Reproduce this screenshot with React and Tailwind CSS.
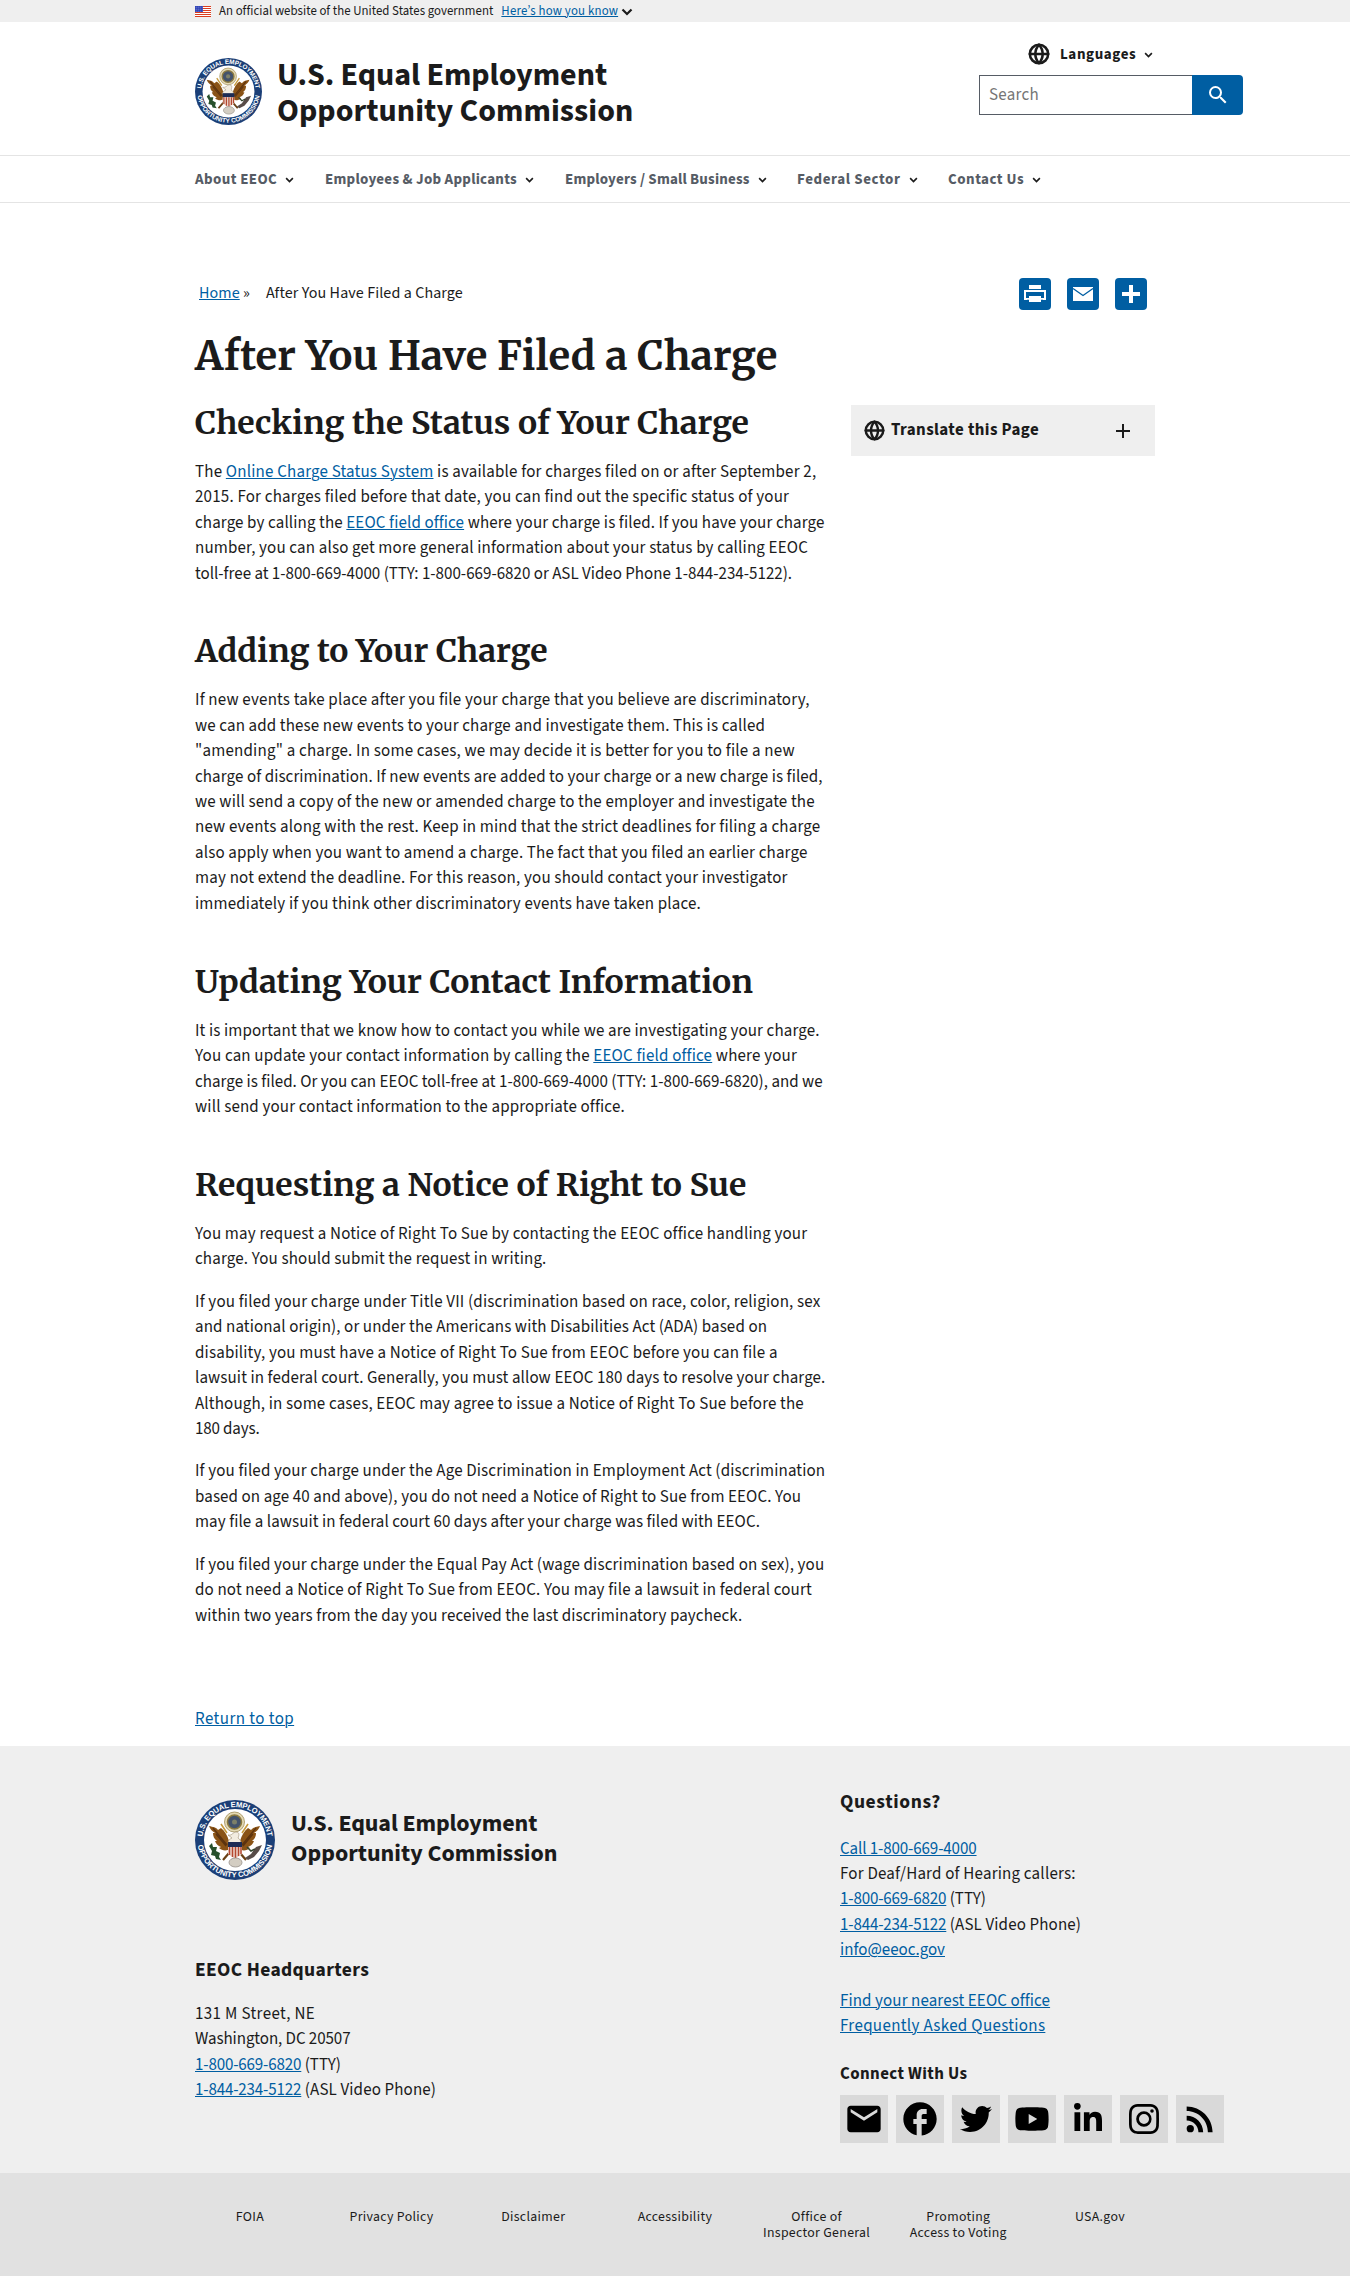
import React from "react";
import { MdEmail, MdFacebook, MdRssFeed, MdSearch, MdAdd } from "react-icons/md";
import { FaTwitter, FaLinkedinIn } from "react-icons/fa";
import { AiFillYoutube } from "react-icons/ai";
import { BsInstagram } from "react-icons/bs";
import { Globe } from "lucide-react";

const A = ({ children, className = "" }) => (
  <a href="#" className={`text-[#005ea2] underline decoration-1 underline-offset-1 ${className}`}>{children}</a>
);

const Chevron = ({ className = "" }) => (
  <svg viewBox="0 0 12 8" className={`shrink-0 ${className}`} fill="none" stroke="currentColor" strokeWidth="2.2">
    <path d="M1.5 1.5 6 6l4.500-4.500" />
  </svg>
);

const Flag = () => (
  <svg viewBox="0 0 16 11" className="h-[11px] w-4 shrink-0">
    <rect width="16" height="11" fill="#fff" />
    {[0, 2, 4, 6, 8, 10].map((y) => (
      <rect key={y} y={y} width="16" height="1" fill="#db3e1f" />
    ))}
    <rect width="8" height="6" fill="#1e33b1" />
    {[1, 3, 5].map((y) =>
      [1, 3, 5, 7].map((x) => <rect key={`${x}-${y}`} x={x - 0.3} y={y - 0.3} width="0.800" height="0.800" fill="#fff" />)
    )}
  </svg>
);

const Seal = ({ className, id }) => (
  <svg viewBox="0 0 80 80" className={`shrink-0 ${className}`}>
    <defs>
      <path id={`${id}-top`} d="M7.800 44A32.500 32.500 0 1 1 72.200 44" />
      <path id={`${id}-bottom`} d="M2.600 40A37.400 37.400 0 0 0 77.400 40" />
    </defs>
    <circle cx="40" cy="40" r="40" fill="#1b3f77" />
    <circle cx="40" cy="40" r="31" fill="#fff" />
    <g fill="#fff" fontFamily="Liberation Sans, sans-serif" fontWeight="700" fontSize="7.600">
      <text textAnchor="middle">
        <textPath href={`#${id}-top`} startOffset="50%" textLength="96">U.S. EQUAL EMPLOYMENT</textPath>
      </text>
      <text textAnchor="middle">
        <textPath href={`#${id}-bottom`} startOffset="50%" textLength="107">OPPORTUNITY COMMISSION</textPath>
      </text>
    </g>
    <circle cx="39.500" cy="22" r="10" fill="#e4d9b4" stroke="#a08d55" strokeWidth="0.800" />
    <circle cx="39.500" cy="22" r="7" fill="#44536b" stroke="#8d7b40" strokeWidth="1.600" />
    <circle cx="39.500" cy="22" r="2.500" fill="#7d8068" />
    <path d="M14 26c4 1 7 1 9 4l3-2c4 3 6 7 8 13l1 8c-3 2-8 2-11-1l2-1c-3-1-5-3-6-6h2c-3-2-4-5-4-8h2c-3-2-5-4-6-7z" fill="#8a5316" />
    <path d="M65 26c-4 1-7 1-9 4l-3-2c-4 3-6 7-8 13l-1 8c3 2 8 2 11-1l-2-1c3-1 5-3 6-6h-2c3-2 4-5 4-8h-2c3-2 5-4 6-7z" fill="#8a5316" />
    <path d="m18 28 14 17M21 34l10 12M61 28 47 45M58 34 48 46" stroke="#5c330f" strokeWidth="1.300" />
    <path d="m26 24 6 9M53 24l-6 9" stroke="#c79a3c" strokeWidth="1.600" />
    <path d="M33 35c4 1 5-3 8-3 4 0 3 4 2 6 2 1 3 3 3 5H33c0-3 2-4 4-5z" fill="#f2ece0" stroke="#a99a80" strokeWidth="0.700" />
    <path d="M34 53l-6 7M45 53l6 7" stroke="#6a4015" strokeWidth="2.200" />
    <path d="M33 42h14v5H33z" fill="#1d2c55" />
    <path d="M33 47h14v7l-7 5-7-5z" fill="#e9cfc5" />
    <path d="M34.500 47v8M37.500 47v10M40.500 47v11M43.500 47v9M46 47v7" stroke="#b4472f" strokeWidth="1.400" />
    <path d="M14 46l3-3 1 4 4 0-1 4 4 2-1 4 2 3-5-1-1-3-4-1 1-4z" fill="#27502c" />
    <path d="M67 45l-6 2-5 7-6 4 3 2 6-3 5-6z" fill="#574c48" />
    <path d="M52 47l4 4 4-2" stroke="#34452f" strokeWidth="1.500" fill="none" />
    <ellipse cx="40.500" cy="62.500" rx="6.500" ry="4.500" fill="#d3cdc2" stroke="#97918a" strokeWidth="0.800" />
  </svg>
);

const nav = [
  { label: "About EEOC", cls: "w-[130px]", text: "tracking-[0.4px]" },
  { label: "Employees & Job Applicants", cls: "w-[240px]", text: "tracking-[0.25px]" },
  { label: "Employers / Small Business", cls: "w-[232px]", text: "tracking-[0.18px]" },
  { label: "Federal Sector", cls: "w-[151px]", text: "tracking-[0.6px]" },
  { label: "Contact Us", cls: "w-[110px]", text: "tracking-[0.5px]" },
];

const P = ({ children }) => <p className="whitespace-nowrap">{children}</p>;

const L = ({ t = "", children }) => <span className={`block ${t}`}>{children}</span>;

const H2 = ({ children, className = "" }) => (
  <h2 className={`mb-[18px] whitespace-nowrap font-[Merriweather,'Noto_Serif',serif] text-[32px] leading-[38px] font-bold ${className}`}>{children}</h2>
);

const ShareButton = ({ children }) => (
  <span className="flex size-8 items-center justify-center rounded-[4px] bg-[#005ea2] text-white">{children}</span>
);

const social = [
  { Icon: MdEmail, cls: "size-10" },
  { Icon: MdFacebook, cls: "size-10" },
  { Icon: FaTwitter, cls: "size-8" },
  { Icon: AiFillYoutube, cls: "size-[38px]" },
  { Icon: FaLinkedinIn, cls: "size-8" },
  { Icon: BsInstagram, cls: "size-[30px]" },
  { Icon: MdRssFeed, cls: "size-10" },
];

const bottomLinks = [
  ["FOIA"], ["Privacy Policy"], ["Disclaimer"], ["Accessibility"],
  ["Office of", "Inspector General"], ["Promoting", "Access to Voting"], ["USA.gov"],
];

export default function App() {
  return (
    <div className="flex h-[2276px] w-[1350px] flex-col bg-white font-['Source_Sans_3','Source_Sans_Pro','Noto_Sans',sans-serif] text-[16.96px] leading-[25.44px] text-[#1b1b1b]">
      <div className="flex h-[22px] shrink-0 items-center bg-[#efefef] pt-px pl-[195px] text-[12.800px] whitespace-nowrap">
        <Flag />
        <span className="ml-2 tracking-[0.05px]">An official website of the United States government</span>
        <span className="ml-2 tracking-[0.18px]"><A>Here’s how you know</A></span>
        <Chevron className="ml-[3px] h-2 w-3" />
      </div>

      <header className="flex h-[133px] shrink-0 pl-[195px]">
        <Seal id="head" className="mt-9 size-[67px]" />
        <div className="mt-[35px] ml-[15px] w-[702px] text-[32px] leading-[36px] font-bold whitespace-nowrap">
          <div className="tracking-[-0.05px]">U.S. Equal Employment</div>
          <div className="tracking-[0.05px]">Opportunity Commission</div>
        </div>
        <div className="w-[264px]">
          <div className="mt-[21px] ml-[49px] flex h-[22px] items-center text-[15px] font-bold">
            <Globe className="size-[22px]" strokeWidth={2.8} />
            <span className="mt-px ml-[10px] tracking-[0.6px]">Languages</span>
            <Chevron className="mt-px ml-2 h-[6px] w-[9px]" />
          </div>
          <div className="mt-[10px] flex h-10">
            <div className="flex flex-1 items-center border border-r-0 border-[#565c65] pt-px pl-[9px] tracking-[0.25px] text-[#757575]">Search</div>
            <div className="flex w-[51px] items-center justify-center rounded-r-[4px] bg-[#005ea2] text-white">
              <MdSearch className="size-6" />
            </div>
          </div>
        </div>
      </header>

      <nav className="flex h-12 shrink-0 items-center border-y border-[#e4e4e4] pt-px pl-[195px] text-[15px] font-bold whitespace-nowrap text-[#565c65]">
        {nav.map((n) => (
          <a key={n.label} className={`flex items-center ${n.cls}`}>
            <span className={n.text}>{n.label}</span>
            <Chevron className="mt-px ml-2 h-[6px] w-[9px] text-[#1b1b1b]" />
          </a>
        ))}
      </nav>

      <main className="flex h-[1543px] shrink-0 flex-col pr-[195px] pl-[195px]">
        <div className="mt-[75px] flex h-8 items-center pr-2">
          <div className="flex flex-1 pl-1 text-[16px]">
            <span className="tracking-[0.1px]"><A>Home</A> »</span>
            <span className="ml-4 tracking-[0.1px]">After You Have Filed a Charge</span>
          </div>
          <div className="flex gap-4">
            <ShareButton>
              <svg viewBox="0 0 22 20" className="h-5 w-[22px]" fill="#fff">
                <path d="M5 1h12v4H5zM0 6h22v10h-3v-3.500H3V16H0z" />
                <path d="M2 8h18v6H2z" fill="#005ea2" />
                <path d="M5 12h12v6H5zM0 6h22v1.600H0zM0 14h6v1.800H0zM16 14h6v1.800h-6z" />
              </svg>
            </ShareButton>
            <ShareButton>
              <svg viewBox="0 0 20 14" className="h-[14px] w-5">
                <path d="M0 0h20v14H0z" fill="#fff" />
                <path d="m0 1.500 10 7 10-7" fill="none" stroke="#005ea2" strokeWidth="1.300" />
              </svg>
            </ShareButton>
            <ShareButton>
              <svg viewBox="0 0 18 18" className="size-[18px]" fill="#fff">
                <path d="M7 0h4v7h7v4h-7v7H7v-7H0V7h7z" />
              </svg>
            </ShareButton>
          </div>
        </div>

        <h1 className="mt-[23px] font-[Merriweather,'Noto_Serif',serif] text-[40px] leading-[47px] font-bold tracking-[0.15px] whitespace-nowrap">After You Have Filed a Charge</h1>

        <div className="mt-6 flex">
          <div className="w-[656px]">
            <H2>Checking the Status of Your Charge</H2>
            <P>
              <L t="tracking-[0.185px]">The <A>Online Charge Status System</A> is available for charges filed on or after September 2,</L>
              <L t="tracking-[0.19px]">2015. For charges filed before that date, you can find out the specific status of your</L>
              <L t="tracking-[0.12px]">charge by calling the <A>EEOC field office</A> where your charge is filed. If you have your charge</L>
              <L t="tracking-[0.16px]">number, you can also get more general information about your status by calling EEOC</L>
              <L>toll-free at 1-800-669-4000 (TTY: 1-800-669-6820 or ASL Video Phone 1-844-234-5122).</L>
            </P>

            <H2 className="mt-[45px]">Adding to Your Charge</H2>
            <P>
              <L t="tracking-[0.18px]">If new events take place after you file your charge that you believe are discriminatory,</L>
              <L t="tracking-[0.13px]">we can add these new events to your charge and investigate them. This is called</L>
              <L t="tracking-[0.2px]">"amending" a charge. In some cases, we may decide it is better for you to file a new</L>
              <L t="tracking-[0.09px]">charge of discrimination. If new events are added to your charge or a new charge is filed,</L>
              <L t="tracking-[0.155px]">we will send a copy of the new or amended charge to the employer and investigate the</L>
              <L t="tracking-[0.16px]">new events along with the rest. Keep in mind that the strict deadlines for filing a charge</L>
              <L t="tracking-[0.155px]">also apply when you want to amend a charge. The fact that you filed an earlier charge</L>
              <L t="tracking-[0.19px]">may not extend the deadline. For this reason, you should contact your investigator</L>
              <L t="tracking-[0.155px]">immediately if you think other discriminatory events have taken place.</L>
            </P>

            <H2 className="mt-[45.500px]">Updating Your Contact Information</H2>
            <P>
              <L t="tracking-[0.135px]">It is important that we know how to contact you while we are investigating your charge.</L>
              <L t="tracking-[0.185px]">You can update your contact information by calling the <A>EEOC field office</A> where your</L>
              <L t="tracking-[0.03px]">charge is filed. Or you can EEOC toll-free at 1-800-669-4000 (TTY: 1-800-669-6820), and we</L>
              <L t="tracking-[0.155px]">will send your contact information to the appropriate office.</L>
            </P>

            <H2 className="mt-[45.500px]">Requesting a Notice of Right to Sue</H2>
            <div className="flex flex-col gap-[17px]">
              <P>
                <L t="tracking-[0.17px]">You may request a Notice of Right To Sue by contacting the EEOC office handling your</L>
                <L t="tracking-[0.15px]">charge. You should submit the request in writing.</L>
              </P>
              <P>
                <L t="tracking-[0.185px]">If you filed your charge under Title VII (discrimination based on race, color, religion, sex</L>
                <L t="tracking-[0.11px]">and national origin), or under the Americans with Disabilities Act (ADA) based on</L>
                <L t="tracking-[0.175px]">disability, you must have a Notice of Right To Sue from EEOC before you can file a</L>
                <L t="tracking-[0.105px]">lawsuit in federal court. Generally, you must allow EEOC 180 days to resolve your charge.</L>
                <L t="tracking-[0.155px]">Although, in some cases, EEOC may agree to issue a Notice of Right To Sue before the</L>
                <L t="tracking-[-0.15px]">180 days.</L>
              </P>
              <P>
                <L t="tracking-[0.15px]">If you filed your charge under the Age Discrimination in Employment Act (discrimination</L>
                <L t="tracking-[0.105px]">based on age 40 and above), you do not need a Notice of Right to Sue from EEOC. You</L>
                <L t="tracking-[0.07px]">may file a lawsuit in federal court 60 days after your charge was filed with EEOC.</L>
              </P>
              <P>
                <L t="tracking-[0.155px]">If you filed your charge under the Equal Pay Act (wage discrimination based on sex), you</L>
                <L t="tracking-[0.16px]">do not need a Notice of Right To Sue from EEOC. You may file a lawsuit in federal court</L>
                <L t="tracking-[0.115px]">within two years from the day you received the last discriminatory paycheck.</L>
              </P>
            </div>
          </div>
          <aside className="mt-px flex h-[51px] w-[304px] items-center bg-[#efefef] pr-5 pl-[13px] font-bold">
            <Globe className="size-[21px]" strokeWidth={2.8} />
            <span className="ml-[6px] flex-1 tracking-[0.4px]">Translate this Page</span>
            <MdAdd className="size-6" />
          </aside>
        </div>
        <div className="mt-[78px] tracking-[0.45px]"><A>Return to top</A></div>
      </main>

      <footer className="flex h-[427px] shrink-0 bg-[#efefef] pl-[195px]">
        <div className="w-[645px]">
          <div className="mt-[54px] flex items-center">
            <Seal id="foot" className="size-20" />
            <div className="ml-4 pb-0.5 text-2xl leading-[30px] font-bold">
              <div className="tracking-[-0.1px]">U.S. Equal Employment</div>
              <div>Opportunity Commission</div>
            </div>
          </div>
          <h3 className="mt-[77px] text-[19.500px] leading-[26px] font-bold tracking-[0.35px]">EEOC Headquarters</h3>
          <div className="mt-[19px]">
            <div className="tracking-[0.36px]">131 M Street, NE</div>
            <div className="tracking-[-0.07px]">Washington, DC 20507</div>
            <div><A className="tracking-[-0.15px]">1-800-669-6820</A> (TTY)</div>
            <div className="tracking-[0.13px]"><A className="tracking-[-0.15px]">1-844-234-5122</A> (ASL Video Phone)</div>
          </div>
        </div>
        <div>
          <h3 className="mt-[43px] text-[19.500px] leading-[26px] font-bold tracking-[0.6px]">Questions?</h3>
          <div className="mt-[21.500px]">
            <div className="tracking-[-0.11px]"><A>Call 1-800-669-4000</A></div>
            <div className="tracking-[0.2px]">For Deaf/Hard of Hearing callers:</div>
            <div><A className="tracking-[-0.15px]">1-800-669-6820</A> (TTY)</div>
            <div className="tracking-[0.13px]"><A className="tracking-[-0.15px]">1-844-234-5122</A> (ASL Video Phone)</div>
            <div><A>info@eeoc.gov</A></div>
          </div>
          <div className="mt-[25px]">
            <div className="tracking-[0.1px]"><A>Find your nearest EEOC office</A></div>
            <div className="tracking-[0.33px]"><A>Frequently Asked Questions</A></div>
          </div>
          <h4 className="mt-[22.500px] font-bold tracking-[0.38px]">Connect With Us</h4>
          <div className="mt-[7px] flex gap-2">
            {social.map(({ Icon, cls }, i) => (
              <span key={i} className="flex size-12 items-center justify-center bg-[#d9d9d9] text-black">
                <Icon className={cls} />
              </span>
            ))}
          </div>
        </div>
      </footer>

      <div className="grid flex-1 grid-cols-[repeat(7,141.700px)] bg-[#e1e1e1] pt-[36px] pl-[179px] text-center text-[13.800px] leading-4 tracking-[0.32px]">
        {bottomLinks.map((l) => (
          <div key={l[0]}>
            {l.map((t) => (
              <div key={t}>{t}</div>
            ))}
          </div>
        ))}
      </div>
    </div>
  );
}
